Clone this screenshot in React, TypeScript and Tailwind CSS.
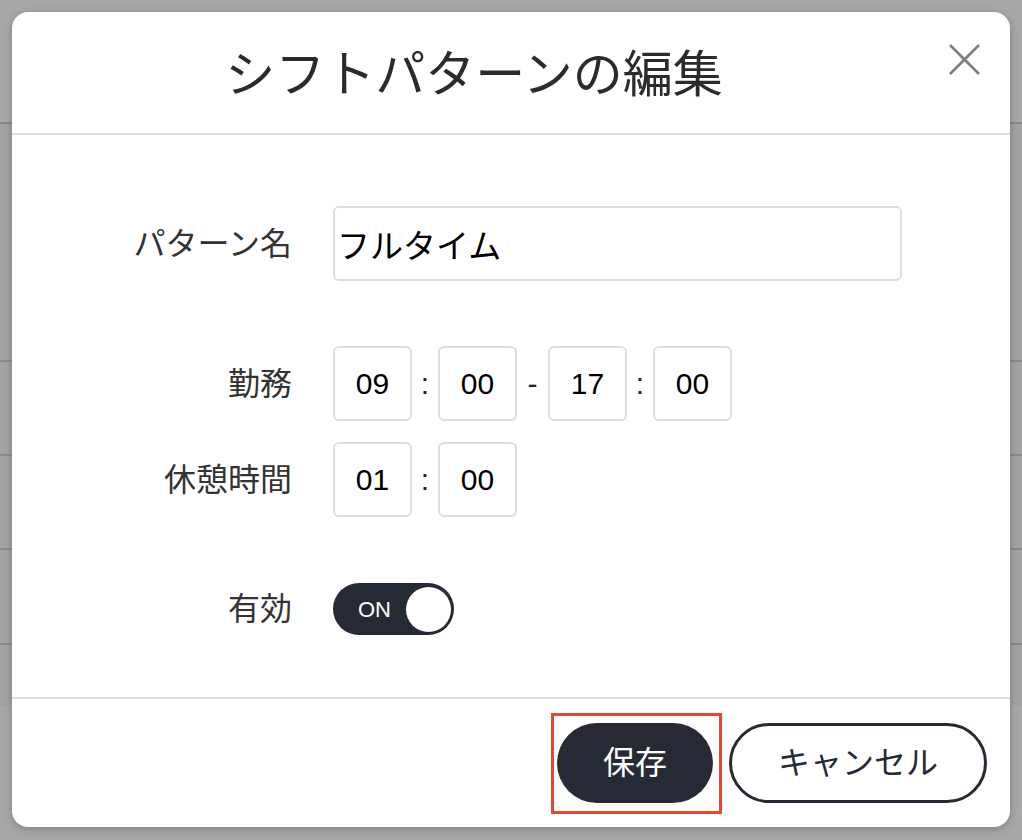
import React, { useState } from 'react';

const jp = { fontFamily: '"Liberation Sans", "Noto Sans CJK JP", sans-serif' };

function TimeBox({ value }: { value: string }) {
  return (
    <div className="flex h-[75px] w-[79px] items-center justify-center rounded-[6px] border-2 border-[#dddddd] bg-white text-[30px] text-black">
      {value}
    </div>
  );
}

function Sep({ char, wide }: { char: string; wide?: boolean }) {
  return (
    <div className={`flex items-center justify-center text-[30px] text-[#222] ${wide ? 'w-[31px]' : 'w-[26px]'}`}>
      {char}
    </div>
  );
}

export default function App() {
  const [enabled, setEnabled] = useState(true);
  const [name, setName] = useState('フルタイム');

  return (
    <div className="relative h-[840px] w-[1022px] overflow-hidden bg-[#a8a8a8]" style={jp}>
      {/* page behind the modal */}
      <div className="flex flex-col">
        <div className="h-[124px] border-b-2 border-[#8a8a8a]" />
        <div className="h-[238px] bg-[#a3a3a3] border-b-2 border-[#8a8a8a]" />
        <div className="h-[94px] bg-[#a3a3a3] border-b-2 border-[#8a8a8a]" />
        <div className="h-[94px] bg-[#a3a3a3] border-b-2 border-[#8a8a8a]" />
        <div className="h-[95px] bg-[#a3a3a3] border-b-2 border-[#8a8a8a]" />
        <div className="h-[61px] bg-[#a3a3a3]" />
      </div>

      {/* modal */}
      <div className="absolute left-[12px] top-[12px] flex h-[815px] w-[998px] flex-col rounded-[16px] bg-white shadow-[0_2px_8px_rgba(0,0,0,0.25)]">
        <div className="relative flex h-[123px] items-center justify-center border-b-2 border-[#dddddd] pr-[74px] pt-[5px]">
          <h2 className="text-[50px] font-normal text-[#2b2b2b]">シフトパターンの編集</h2>
          <button className="absolute right-[30px] top-[32px] h-[31px] w-[31px]" aria-label="close">
            <svg viewBox="0 0 31 31" className="h-[31px] w-[31px]">
              <path d="M1 1 L30 30 M30 1 L1 30" stroke="#7d7d7d" strokeWidth="2.6" fill="none" />
            </svg>
          </button>
        </div>

        <div className="flex flex-1 flex-col pt-[71px]">
          <div className="flex items-center">
            <label className="w-[280px] text-right text-[32px] text-[#333]">パターン名</label>
            <input
              value={name}
              onChange={(e) => setName(e.target.value)}
              className="ml-[41px] h-[75px] w-[569px] rounded-[6px] border-2 border-[#dddddd] pl-[2px] text-[33px] text-black outline-none"
              style={jp}
            />
          </div>

          <div className="mt-[65px] flex items-center">
            <label className="w-[280px] text-right text-[32px] text-[#333]">勤務</label>
            <div className="ml-[41px] flex">
              <TimeBox value="09" />
              <Sep char=":" />
              <TimeBox value="00" />
              <Sep char="-" wide />
              <TimeBox value="17" />
              <Sep char=":" />
              <TimeBox value="00" />
            </div>
          </div>

          <div className="mt-[21px] flex items-center">
            <label className="w-[280px] text-right text-[32px] text-[#333]">休憩時間</label>
            <div className="ml-[41px] flex">
              <TimeBox value="01" />
              <Sep char=":" />
              <TimeBox value="00" />
            </div>
          </div>

          <div className="mt-[66px] flex items-center">
            <label className="w-[280px] text-right text-[32px] text-[#333]">有効</label>
            <button
              onClick={() => setEnabled(!enabled)}
              className="ml-[41px] flex h-[52px] w-[121px] items-center justify-between rounded-full bg-[#252a35] pl-[25px] pr-[3px]"
            >
              <span className="text-[22px] text-white">{enabled ? 'ON' : 'OFF'}</span>
              <span className="h-[45px] w-[45px] rounded-full bg-white" />
            </button>
          </div>
        </div>

        <div className="flex h-[130px] items-center justify-end gap-[16px] border-t-2 border-[#dddddd] pr-[23px]">
          <div className="relative">
            <button className="h-[80px] w-[156px] rounded-full bg-[#252a35] text-[32px] text-white">保存</button>
            <div className="pointer-events-none absolute -bottom-[11px] -left-[6px] -right-[9px] -top-[10px] border-[3px] border-[#e8472e]" />
          </div>
          <button className="h-[80px] w-[258px] rounded-full border-[3px] border-[#252a35] bg-white text-[32px] text-[#252a35]">
            キャンセル
          </button>
        </div>
      </div>
    </div>
  );
}
